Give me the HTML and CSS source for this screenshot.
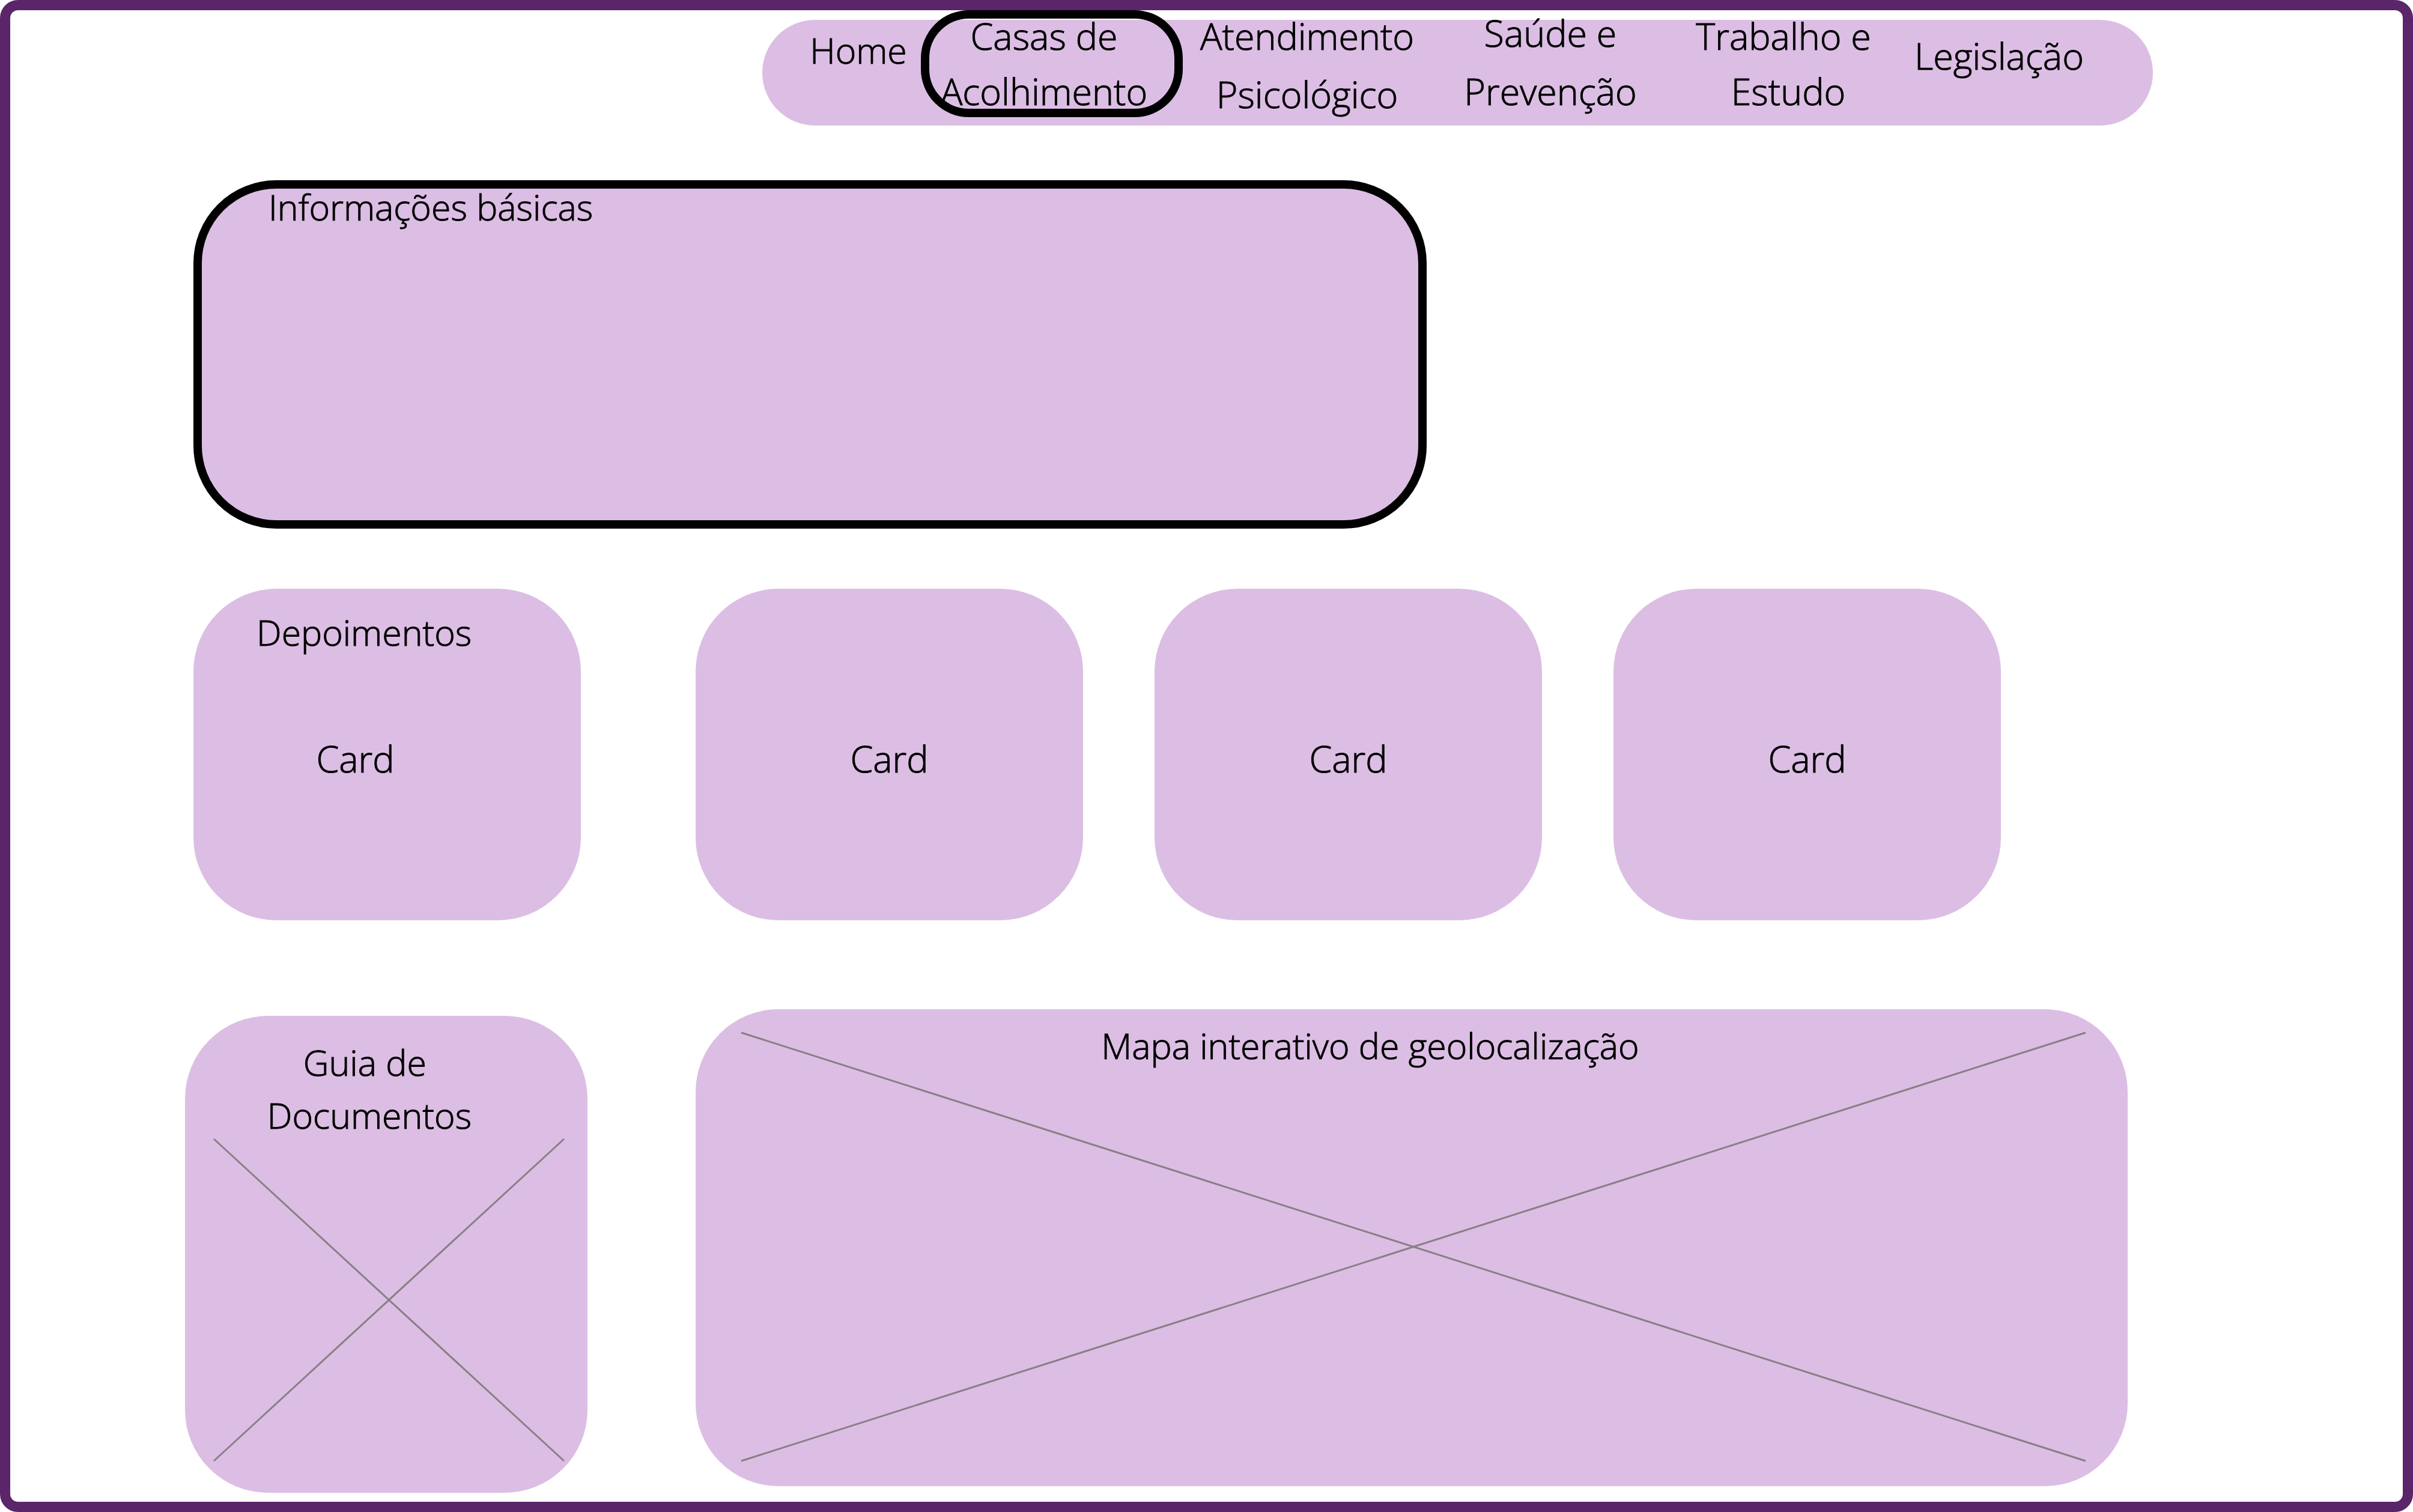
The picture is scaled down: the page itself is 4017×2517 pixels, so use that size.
FILE: index.html
```html
<!DOCTYPE html>
<html lang="pt-BR">
<head>
  <meta charset="utf-8">
  <meta name="viewport" content="width=device-width, initial-scale=1">
  <title>Casas de Acolhimento</title>
  <link rel="stylesheet" href="styles.css">
</head>
<body>
  <div class="frame">
    <header class="header">
      <nav class="nav" aria-label="Principal">
        <a class="nav-link nav-home" href="#home">Home</a>
        <a class="nav-link nav-current" href="#casas" aria-current="page">Casas de<br>Acolhimento</a>
        <a class="nav-link nav-care" href="#atendimento">Atendimento<br>Psicológico</a>
        <a class="nav-link nav-health" href="#saude">Saúde e<br>Prevenção</a>
        <a class="nav-link nav-work" href="#trabalho">Trabalho e&nbsp;<br>Estudo</a>
        <a class="nav-link nav-law" href="#legislacao">Legislação</a>
      </nav>
    </header>

    <main class="content">
      <div class="row-info">
        <section class="info">
          <h1 class="title">Informações básicas</h1>
        </section>
      </div>

      <section class="row-cards" aria-label="Depoimentos">
        <article class="card card-first">
          <h2 class="title">Depoimentos</h2>
          <p class="card-text">Card</p>
        </article>
        <article class="card"><p class="card-text">Card</p></article>
        <article class="card"><p class="card-text">Card</p></article>
        <article class="card"><p class="card-text">Card</p></article>
      </section>

      <div class="row-panels">
        <section class="guide">
          <h2 class="guide-title">Guia de&nbsp;<br>Documentos</h2>
          <svg class="cross guide-cross" viewBox="0 0 100 100" preserveAspectRatio="none" aria-hidden="true">
            <path d="M0 0 100 100M100 0 0 100"/>
          </svg>
        </section>
        <section class="map">
          <svg class="cross map-cross" viewBox="0 0 100 100" preserveAspectRatio="none" aria-hidden="true">
            <path d="M0 0 100 100M100 0 0 100"/>
          </svg>
          <h2 class="title map-title">Mapa interativo de geolocalização</h2>
        </section>
      </div>
    </main>
  </div>
</body>
</html>
```
FILE: styles.css
```css
:root {
  --lilac: #dcbee4;
  --purple: #5a2569;
  --line: #868086;
}

* {
  box-sizing: border-box;
}

body {
  margin: 0;
  background: #fff;
  color: #000;
  font-family: "Open Sans", "Noto Sans", sans-serif;
  font-size: 59px;
  font-weight: 300;
  line-height: 60px;
  -webkit-text-stroke: 1px currentColor;
}

h1, h2, p {
  margin: 0;
  font-size: inherit;
  font-weight: inherit;
}

.frame {
  min-height: 100vh;
  border: 17px solid var(--purple);
  border-radius: 30px;
}

/* Navigation */
.header {
  display: grid;
  grid-template-columns: 1252fr 2315fr 416fr;
  padding-top: 16px;
}

.nav {
  grid-column: 2;
  display: grid;
  grid-template-columns: 264fr 410fr 466fr 344fr 418fr 314fr 99fr;
  align-items: start;
  height: 176px;
  border-radius: 88px;
  background: var(--lilac);
}

.nav-link {
  position: relative;
  margin-top: -19px;
  color: inherit;
  font-size: 61px;
  line-height: 92px;
  text-align: center;
  text-decoration: none;
  white-space: nowrap;
}

.nav-home {
  margin-top: 4px;
  padding-left: 56px;
  font-size: 59px;
}

.nav-care,
.nav-health {
  margin-top: -22px;
  line-height: 97px;
}

.nav-health {
  margin-top: -27px;
}

.nav-work {
  padding-left: 30px;
}

.nav-law {
  margin-top: 14px;
}

/* Ring around the current page's link */
.nav-current::after {
  content: "";
  position: absolute;
  inset: 3px -26px 3px 0;
  border: 14px solid #000;
  border-radius: 80px;
}

/* Basic information */
.row-info {
  display: grid;
  grid-template-columns: 305fr 2053fr 1625fr;
  margin-top: 91px;
}

.info {
  grid-column: 2;
  min-height: 580px;
  padding-left: 111px;
  border: 14px solid #000;
  border-radius: 138px;
  background: var(--lilac);
}

/* Testimonials */
.row-cards {
  display: grid;
  grid-template-columns: 305fr 645fr 191fr 645fr 119fr 645fr 119fr 645fr 669fr;
  margin-top: 100px;
}

.card {
  display: grid;
  grid-template-rows: 60px 60px;
  row-gap: 151px;
  min-height: 552px;
  padding-top: 42px;
  border-radius: 138px;
  background: var(--lilac);
}

.card:nth-child(1) { grid-column: 2; }
.card:nth-child(2) { grid-column: 4; }
.card:nth-child(3) { grid-column: 6; }
.card:nth-child(4) { grid-column: 8; }

.card-text {
  grid-row: 2;
  font-size: 61px;
  text-align: center;
}

.card-first {
  padding-left: 105px;
}

.card-first .card-text {
  padding-right: 211px;
}

/* Guide and map */
.row-panels {
  display: grid;
  grid-template-columns: 291fr 670fr 180fr 2384fr 458fr;
  align-items: start;
  margin-top: 148px;
}

.guide,
.map {
  min-height: 794px;
  border-radius: 138px;
  background: var(--lilac);
}

.guide {
  grid-column: 2;
  margin-top: 11px;
  padding: 33px 39px 53px 48px;
}

.guide-title {
  padding-right: 65px;
  line-height: 88px;
  text-align: center;
}

.map {
  grid-column: 4;
  display: grid;
  padding: 39px 70px 42px 76px;
}

.map-cross,
.map-title {
  grid-area: 1 / 1;
}

.map-title {
  margin-top: -9px;
  padding-right: 144px;
  text-align: center;
}

.cross {
  display: block;
  width: 100%;
  overflow: visible;
}

.guide-cross {
  height: 536px;
  margin-top: -4px;
}

.map-cross {
  height: 713px;
}

.cross path {
  fill: none;
  stroke: var(--line);
  stroke-width: 3px;
  vector-effect: non-scaling-stroke;
}
```
